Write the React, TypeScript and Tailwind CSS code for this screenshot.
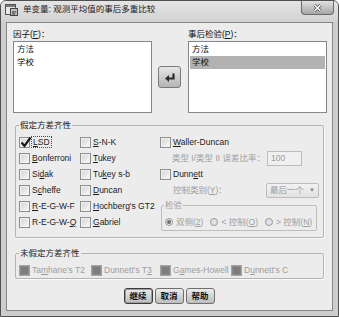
import type { ReactNode } from 'react';

const font = "font-['Liberation_Sans','Noto_Sans_CJK_SC',sans-serif]";

/* mnemonic underline */
function U({ children }: { children: ReactNode }) {
  return <span className="underline decoration-1 underline-offset-[1px]">{children}</span>;
}

function Box({ checked = false, disabled = false }: { checked?: boolean; disabled?: boolean }) {
  if (disabled)
    return (
      <span className="block h-[11px] w-[11px] shrink-0 border border-[#a3a3a3] bg-[#7d7d7d] shadow-[inset_0_0_0_1px_#8c8c8c]" />
    );
  return (
    <span className="relative block h-[11px] w-[11px] shrink-0 border border-[#8d8d8d] bg-gradient-to-br from-[#d2d2d2] to-[#fafafa] shadow-[inset_0_0_0_1px_#f2f2f2]">
      {checked && (
        <svg className="absolute -top-[2px] left-[0px] h-[12px] w-[12px]" viewBox="0 0 12 12">
          <path d="M1.5 6.5 L4.5 10 L10.5 1.5" fill="none" stroke="#1c1c1c" strokeWidth="2.2" />
        </svg>
      )}
    </span>
  );
}

function Check({
  label,
  checked,
  disabled,
  focus,
}: {
  label: ReactNode;
  checked?: boolean;
  disabled?: boolean;
  focus?: boolean;
}) {
  return (
    <div className="flex h-[16px] items-center gap-[1px]">
      <Box checked={checked} disabled={disabled} />
      <span
        className={
          (disabled ? 'text-[#9d9d9d] ' : 'text-[#1b1b1b] ') +
          (focus ? 'border border-dotted border-[#4a4a4a] px-[1px] leading-[10px]' : 'pl-[1px] leading-[12px]')
        }
      >
        {label}
      </span>
    </div>
  );
}

function Radio({ on, label }: { on?: boolean; label: ReactNode }) {
  return (
    <div className="flex items-center gap-[3px]">
      <span className="flex h-[8px] w-[8px] items-center justify-center rounded-full border border-[#9a9a9a] bg-[#e2e2e2]">
        {on && <span className="block h-[4px] w-[4px] rounded-full bg-[#6e6e6e]" />}
      </span>
      <span className="text-[#9d9d9d]">{label}</span>
    </div>
  );
}

function ListBox({ items, selected }: { items: string[]; selected?: number }) {
  return (
    <div className="mt-[1px] h-[72px] border border-[#828790] bg-white pt-[1px]">
      {items.map((it, i) => (
        <div
          key={it}
          className={
            'mx-[1px] flex h-[13px] items-center pl-[2px] text-[#111] ' + (i === selected ? 'bg-[#b2b2b2]' : '')
          }
        >
          {it}
        </div>
      ))}
    </div>
  );
}

function Btn({ children, primary }: { children: ReactNode; primary?: boolean }) {
  return (
    <button
      className={
        'flex h-[16px] w-[29px] items-center justify-center rounded-[3px] border bg-gradient-to-b from-[#ececec] to-[#bdbdbd] font-bold text-[#111] ' +
        (primary ? 'border-[#3c3c3c] shadow-[inset_0_0_0_1px_#9a9a9a]' : 'border-[#6f6f6f]')
      }
    >
      {children}
    </button>
  );
}

export default function App() {
  return (
    <div className={`h-[317px] w-[339px] bg-white text-[8.5px] ${font}`}>
      <div className="flex h-[317px] w-[339px] flex-col rounded-t-[6px] border border-[#505050] bg-[#cdcdcd]">
        {/* title bar */}
        <div className="flex h-[21px] rounded-t-[5px] bg-gradient-to-b from-[#e4e4e4] to-[#d2d2d2]">
          <svg className="ml-[4px] mt-[2px] h-[13px] w-[13px]" viewBox="0 0 13 13">
            <rect x="0.5" y="1.5" width="10" height="10" fill="#e8e8e8" stroke="#555" />
            <rect x="1" y="2" width="9" height="2" fill="#777" />
            <rect x="5.5" y="5.5" width="7" height="7" fill="#bdbdbd" stroke="#444" />
            <path d="M7 9 h4 M7 11 h3" stroke="#333" />
          </svg>
          <span className="ml-[5px] mt-[2px] text-[#222]">单变量: 观测平均值的事后多重比较</span>
          <div className="ml-auto mr-[4px] flex h-[14px] w-[33px] items-center justify-center rounded-b-[4px] border border-t-0 border-[#6a6a6a] bg-gradient-to-b from-[#e2e2e2] to-[#a6a6a6]">
            <svg className="h-[8px] w-[9px]" viewBox="0 0 9 8">
              <path d="M1.5 1 L7.5 7 M7.5 1 L1.5 7" stroke="#555" strokeWidth="3" />
              <path d="M1.5 1 L7.5 7 M7.5 1 L1.5 7" stroke="#fff" strokeWidth="1.4" />
            </svg>
          </div>
        </div>

        {/* client area */}
        <div className="flex flex-1 px-[5px] pb-[5px]">
          <div className="flex flex-1 flex-col border border-[#878787] bg-[#ececec]">
            {/* variable lists */}
            <div className="flex items-start pl-[6px] pt-[5px]">
              <div className="w-[139px]">
                <div className="h-[12px] leading-[12px] text-[#111]">
                  因子(<U>F</U>)：
                </div>
                <ListBox items={['方法', '学校']} />
              </div>
              <button className="ml-[6px] mt-[38px] flex h-[22px] w-[23px] items-center justify-center rounded-[3px] border border-[#7a7a7a] bg-gradient-to-b from-[#e6e6e6] to-[#b4b4b4]">
                <svg className="h-[10px] w-[12px]" viewBox="0 0 12 10">
                  <path d="M1 6.5 L5 3 L5 10 Z" fill="#2a2a2a" />
                  <path d="M4.5 6.5 H9.5 V1.5" fill="none" stroke="#2a2a2a" strokeWidth="2.2" />
                </svg>
              </button>
              <div className="ml-[7px] w-[139px]">
                <div className="h-[12px] leading-[12px] text-[#111]">
                  事后检验(<U>P</U>)：
                </div>
                <ListBox items={['方法', '学校']} selected={1} />
              </div>
            </div>

            {/* equal variances assumed */}
            <fieldset className="ml-[8px] mt-[6px] h-[119px] w-[309px] rounded-[2px] border border-[#b4b4b4] shadow-[1px_1px_0_#fafafa]">
              <legend className="ml-[3px] px-[1px] leading-[12px] text-[#222]">假定方差齐性</legend>
              <div className="flex pl-[3px] pt-[3px]">
                <div className="w-[61px]">
                  <Check checked focus label={<><U>L</U>SD</>} />
                  <Check label={<><U>B</U>onferroni</>} />
                  <Check label={<>Si<U>d</U>ak</>} />
                  <Check label={<>S<U>c</U>heffe</>} />
                  <Check label={<><U>R</U>-E-G-W-F</>} />
                  <Check label={<>R-E-G-W-<U>Q</U></>} />
                </div>
                <div className="w-[80px]">
                  <Check label={<><U>S</U>-N-K</>} />
                  <Check label={<><U>T</U>ukey</>} />
                  <Check label={<>Tu<U>k</U>ey s-b</>} />
                  <Check label={<><U>D</U>uncan</>} />
                  <Check label={<><U>H</U>ochberg's GT2</>} />
                  <Check label={<><U>G</U>abriel</>} />
                </div>
                <div className="w-[160px]">
                  <Check label={<><U>W</U>aller-Duncan</>} />
                  <div className="flex h-[16px] items-center pl-[12px] text-[#9d9d9d]">
                    <span>类型 I/类型 II 误差比率：</span>
                    <span className="ml-auto mr-[18px] flex h-[15px] w-[35px] items-center border border-[#bdbdbd] bg-[#f0f0f0] pl-[3px]">
                      100
                    </span>
                  </div>
                  <Check label={<>Dunn<U>e</U>tt</>} />
                  <div className="flex h-[16px] items-center pl-[13px] text-[#9d9d9d]">
                    <span>
                      控制类别(<U>Y</U>)：
                    </span>
                    <span className="ml-auto mr-[1px] flex h-[15px] w-[53px] items-center justify-between rounded-[2px] border border-[#bdbdbd] bg-gradient-to-b from-[#f2f2f2] to-[#e2e2e2] pl-[3px] pr-[3px]">
                      最后一个<span className="text-[6px] text-[#8a8a8a]">▼</span>
                    </span>
                  </div>
                  <fieldset className="ml-[1px] mt-[1px] h-[32px] w-[156px] rounded-[2px] border border-[#bdbdbd]">
                    <legend className="ml-[2px] px-[1px] leading-[12px] text-[#9d9d9d]">检验</legend>
                    <div className="flex items-center gap-[7px] pl-[3px] pt-[5px]">
                      <Radio on label={<>双侧(<U>2</U>)</>} />
                      <Radio label={<>&lt; 控制(<U>O</U>)</>} />
                      <Radio label={<>&gt; 控制(<U>N</U>)</>} />
                    </div>
                  </fieldset>
                </div>
              </div>
            </fieldset>

            {/* equal variances not assumed */}
            <fieldset className="ml-[8px] mt-[9px] h-[32px] w-[309px] rounded-[2px] border border-[#b4b4b4] shadow-[1px_1px_0_#fafafa]">
              <legend className="ml-[3px] px-[1px] leading-[12px] text-[#222]">未假定方差齐性</legend>
              <div className="flex pl-[3px] pt-[3px]">
                <div className="w-[72px]">
                  <Check disabled label={<>Ta<U>m</U>hane's T2</>} />
                </div>
                <div className="w-[69px]">
                  <Check disabled label={<>Dunnett's T<U>3</U></>} />
                </div>
                <div className="w-[71px]">
                  <Check disabled label={<>G<U>a</U>mes-Howell</>} />
                </div>
                <Check disabled label={<>D<U>u</U>nnett's C</>} />
              </div>
            </fieldset>

            {/* buttons */}
            <div className="mt-[9px] flex justify-center gap-[2px] pr-[1px]">
              <Btn primary>继续</Btn>
              <Btn>取消</Btn>
              <Btn>帮助</Btn>
            </div>
          </div>
        </div>
      </div>
    </div>
  );
}
